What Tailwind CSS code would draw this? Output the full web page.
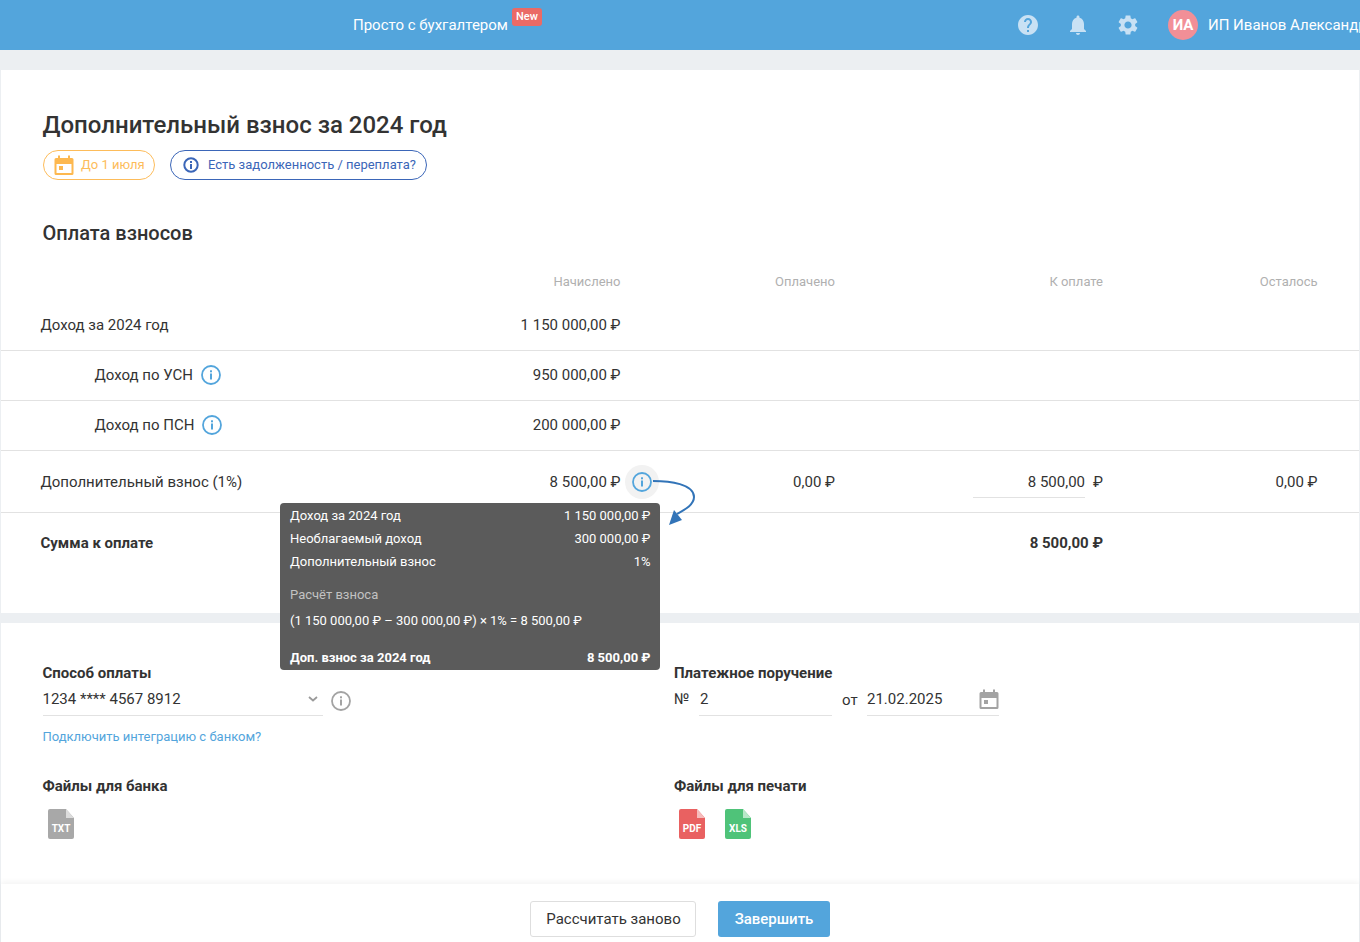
<!DOCTYPE html>
<html lang="ru">
<head>
  <meta charset="UTF-8">
  <meta name="viewport" content="width=device-width, initial-scale=1.0">
  <title>Дополнительный взнос за 2024 год</title>
  <script src="https://cdn.jsdelivr.net/npm/@tailwindcss/browser@4"></script>
</head>
<body class="bg-[#eceff2] font-['Roboto',sans-serif] text-[#333333] h-[942px] overflow-hidden">

  <!-- Header -->
  <header class="h-[50px] bg-[#53a5dc] flex items-center text-white relative">
    <div class="pl-[353px] flex-1 text-[15px] font-normal">
      <span class="relative">Просто с бухгалтером
        <span class="absolute left-[159px] top-[-8px] w-[30px] h-[18px] rounded-[3px] bg-[#ea6a66] text-[11px] font-medium flex items-center justify-center">New</span>
      </span>
    </div>
    <div class="flex items-center shrink-0 w-[344px] overflow-hidden whitespace-nowrap">
      <svg class="w-6 h-6 shrink-0" viewBox="0 0 24 24" fill="#c8e1f4"><path d="M12 2C6.48 2 2 6.48 2 12s4.48 10 10 10 10-4.48 10-10S17.52 2 12 2zm1 17h-2v-2h2v2zm2.07-7.75-.9.92C13.45 12.9 13 13.5 13 15h-2v-.5c0-1.1.45-2.1 1.17-2.83l1.24-1.26c.37-.36.59-.86.59-1.41 0-1.1-.9-2-2-2s-2 .9-2 2H8c0-2.21 1.79-4 4-4s4 1.79 4 4c0 .88-.36 1.68-.93 2.25z"/></svg>
      <svg class="w-6 h-6 shrink-0 ml-[26px]" viewBox="0 0 24 24" fill="#c8e1f4"><path d="M12 22c1.1 0 2-.9 2-2h-4c0 1.1.9 2 2 2zm6-6v-5c0-3.07-1.63-5.64-4.5-6.32V4c0-.83-.67-1.5-1.5-1.5s-1.5.67-1.5 1.5v.68C7.64 5.36 6 7.92 6 11v5l-2 2v1h16v-1l-2-2z"/></svg>
      <svg class="w-6 h-6 shrink-0 ml-[26px]" viewBox="0 0 24 24" fill="#c8e1f4"><path d="M19.14 12.94c.04-.3.06-.61.06-.94 0-.32-.02-.64-.07-.94l2.03-1.58c.18-.14.23-.41.12-.61l-1.92-3.32c-.12-.22-.37-.29-.59-.22l-2.39.96c-.5-.38-1.03-.7-1.62-.94l-.36-2.54c-.04-.24-.24-.41-.48-.41h-3.84c-.24 0-.43.17-.47.41l-.36 2.54c-.59.24-1.13.57-1.62.94l-2.39-.96c-.22-.08-.47 0-.59.22L2.74 8.87c-.12.21-.08.47.12.61l2.03 1.58c-.05.3-.09.63-.09.94s.02.64.07.94l-2.03 1.58c-.18.14-.23.41-.12.61l1.92 3.32c.12.22.37.29.59.22l2.39-.96c.5.38 1.03.7 1.62.94l.36 2.54c.05.24.24.41.48.41h3.84c.24 0 .44-.17.47-.41l.36-2.54c.59-.24 1.13-.56 1.62-.94l2.39.96c.22.08.47 0 .59-.22l1.92-3.32c.12-.22.07-.47-.12-.61l-2.01-1.58zM12 15.6c-1.98 0-3.6-1.62-3.6-3.6s1.62-3.6 3.6-3.6 3.6 1.62 3.6 3.6-1.62 3.6-3.6 3.6z"/></svg>
      <div class="w-[30px] h-[30px] shrink-0 rounded-full bg-[#f28f97] ml-[28px] flex items-center justify-center text-[15px] font-bold">ИА</div>
      <span class="ml-[10px] text-[15px]">ИП Иванов Александр</span>
    </div>
  </header>

  <main class="relative">
    <!-- Top card -->
    <section class="mt-5 mx-px bg-white h-[543px]">
      <div class="pt-[38px] pl-[41.5px]">
        <h1 class="text-[24px] leading-[34px] font-medium">Дополнительный взнос за 2024 год</h1>
        <div class="flex gap-[15px] mt-[8px] h-[30px]">
          <div class="border border-[#fdbc5a] rounded-full flex items-center pl-[10.5px] w-[112px] text-[13px] text-[#fdbc5a] gap-[7px]">
            <svg class="w-[20px] h-[22px]" viewBox="0 0 20 22" fill="#fdb84f"><path d="M2 4h2V1.500h2V4h8V1.500h2V4h2a1.500 1.500 0 0 1 1.500 1.500v14A1.500 1.500 0 0 1 18 21H2A1.500 1.500 0 0 1 .5 19.500v-14A1.500 1.500 0 0 1 2 4zm.5 6v9h15v-9zM5 12h4v4H5z" fill-rule="evenodd"/></svg>
            До 1 июля
          </div>
          <div class="border border-[#3b66b8] rounded-full flex items-center pl-[12.5px] w-[257px] text-[13px] text-[#3b66b8] gap-[9px]">
            <svg class="w-4 h-4" viewBox="0 0 16 16" fill="none"><circle cx="8" cy="8" r="6.700" stroke="#3b66b8" stroke-width="2"/><rect x="7" y="7" width="2" height="5" fill="#3b66b8"/><rect x="7" y="4" width="2" height="2" fill="#3b66b8"/></svg>
            Есть задолженность / переплата?
          </div>
        </div>
        <h2 class="text-[20px] leading-7 font-medium mt-[39px]">Оплата взносов</h2>
      </div>

      <!-- Table -->
      <div class="mt-[25px] text-[15px]">
        <div class="grid grid-cols-[580px_214.500px_268px_214.500px] pl-[39.5px] h-[20px] items-center text-[13px] text-[#b0b0b0] text-right">
          <div>Начислено</div><div>Оплачено</div><div>К оплате</div><div>Осталось</div>
        </div>
        <div class="grid grid-cols-[580px_214.500px_268px_214.500px] pl-[39.5px] h-[59px] pt-[9px] items-center border-b border-[#e2e2e2] text-right">
          <div class="flex justify-between"><span>Доход за 2024 год</span><span>1 150 000,00 ₽</span></div>
        </div>
        <div class="grid grid-cols-[580px_214.500px_268px_214.500px] pl-[39.5px] h-[50px] items-center border-b border-[#e2e2e2] text-right">
          <div class="flex justify-between">
            <span class="pl-[54px] flex items-center gap-[8px]">Доход по УСН
              <svg class="w-[20px] h-[20px] -mt-px" viewBox="0 0 20 20" fill="none"><circle cx="10" cy="10" r="9" stroke="#53a5dc" stroke-width="1.800"/><rect x="9" y="8.500" width="2" height="6" fill="#53a5dc"/><rect x="9" y="5.300" width="2" height="2" fill="#53a5dc"/></svg>
            </span>
            <span>950 000,00 ₽</span>
          </div>
        </div>
        <div class="grid grid-cols-[580px_214.500px_268px_214.500px] pl-[39.5px] h-[50px] items-center border-b border-[#e2e2e2] text-right">
          <div class="flex justify-between">
            <span class="pl-[54px] flex items-center gap-[8px]">Доход по ПСН
              <svg class="w-[20px] h-[20px] -mt-px" viewBox="0 0 20 20" fill="none"><circle cx="10" cy="10" r="9" stroke="#53a5dc" stroke-width="1.800"/><rect x="9" y="8.500" width="2" height="6" fill="#53a5dc"/><rect x="9" y="5.300" width="2" height="2" fill="#53a5dc"/></svg>
            </span>
            <span>200 000,00 ₽</span>
          </div>
        </div>
        <div class="grid grid-cols-[580px_214.500px_268px_214.500px] pl-[39.5px] h-[62px] pt-[2px] items-center border-b border-[#e2e2e2] text-right">
          <div class="flex justify-between"><span>Дополнительный взнос (1%)</span><span>8 500,00 ₽</span></div>
          <div>0,00 ₽</div>
          <div class="flex justify-end gap-[8px]">
            <div class="w-[112px] h-[30px] border-b border-[#e2e2e2] leading-[29px]">8 500,00</div>
            <span class="leading-[29px]">₽</span>
          </div>
          <div>0,00 ₽</div>
        </div>
        <div class="grid grid-cols-[580px_214.500px_268px_214.500px] pl-[39.5px] h-[60px] items-center font-bold text-right">
          <div class="text-left">Сумма к оплате</div>
          <div></div>
          <div>8 500,00 ₽</div>
        </div>
      </div>
    </section>

    <!-- Payment card -->
    <section class="mt-[10px] mx-px bg-white h-[261px] grid grid-cols-[631.5px_1fr] pl-[41.5px] pt-[40px] text-[15px] content-start">
      <div>
        <div class="font-bold leading-[20px]">Способ оплаты</div>
        <div class="flex items-center">
          <div class="w-[280.5px] h-[33px] border-b border-[#e2e2e2] flex items-center justify-between">
            <span>1234 **** 4567 8912</span>
            <svg class="w-[10px] h-[6px] mr-[5px]" viewBox="0 0 10 6" fill="none"><path d="M1 1l4 3.500L9 1" stroke="#9a9a9a" stroke-width="1.800"/></svg>
          </div>
          <svg class="w-5 h-5 ml-[8px] mt-[2px]" viewBox="0 0 20 20" fill="none"><circle cx="10" cy="10" r="9" stroke="#a3a3a3" stroke-width="1.800"/><rect x="9" y="8.500" width="2" height="6" fill="#a3a3a3"/><rect x="9" y="5.300" width="2" height="2" fill="#a3a3a3"/></svg>
        </div>
        <div class="text-[13px] text-[#53a5dc] mt-[13px] leading-[16px]">Подключить интеграцию с банком?</div>
        <div class="font-bold leading-[20px] mt-[31px]">Файлы для банка</div>
        <div class="flex mt-[13px] pl-[5.5px]">
          <div class="relative w-[26px] h-[30px] text-white text-[10px] font-bold">
            <svg class="absolute inset-0 w-full h-full" viewBox="0 0 26 30"><path d="M2 0H18L26 9V28a2 2 0 0 1-2 2H2a2 2 0 0 1-2-2V2a2 2 0 0 1 2-2z" fill="#a8a8a8"/><path d="M18 0L26 9H18z" fill="#dcdcdc"/></svg>
            <span class="relative flex justify-center pt-[14px] leading-[12px]">TXT</span>
          </div>
        </div>
      </div>
      <div>
        <div class="font-bold leading-[20px]">Платежное поручение</div>
        <div class="flex items-center">
          <span class="w-[25px]">№</span>
          <div class="w-[133px] h-[33px] border-b border-[#e2e2e2] flex items-center pl-px">2</div>
          <span class="ml-[10px] w-[25px] pt-[2px]">от</span>
          <div class="w-[132px] h-[33px] border-b border-[#e2e2e2] flex items-center justify-between">
            <span>21.02.2025</span>
            <svg class="w-[20px] h-[22px]" viewBox="0 0 20 22" fill="#a3a3a3"><path d="M2 4h2V1.500h2V4h8V1.500h2V4h2a1.500 1.500 0 0 1 1.500 1.500v14A1.500 1.500 0 0 1 18 21H2A1.500 1.500 0 0 1 .5 19.500v-14A1.500 1.500 0 0 1 2 4zm.5 6v9h15v-9zM5 12h4v4H5z" fill-rule="evenodd"/></svg>
          </div>
        </div>
        <div class="font-bold leading-[20px] mt-[60px]">Файлы для печати</div>
        <div class="flex mt-[13px] pl-[5px] gap-[20px]">
          <div class="relative w-[26px] h-[30px] text-white text-[10px] font-bold">
            <svg class="absolute inset-0 w-full h-full" viewBox="0 0 26 30"><path d="M2 0H18L26 9V28a2 2 0 0 1-2 2H2a2 2 0 0 1-2-2V2a2 2 0 0 1 2-2z" fill="#e96161"/><path d="M18 0L26 9H18z" fill="#f6bcbc"/></svg>
            <span class="relative flex justify-center pt-[14px] leading-[12px]">PDF</span>
          </div>
          <div class="relative w-[26px] h-[30px] text-white text-[10px] font-bold">
            <svg class="absolute inset-0 w-full h-full" viewBox="0 0 26 30"><path d="M2 0H18L26 9V28a2 2 0 0 1-2 2H2a2 2 0 0 1-2-2V2a2 2 0 0 1 2-2z" fill="#4fc379"/><path d="M18 0L26 9H18z" fill="#b8e8c9"/></svg>
            <span class="relative flex justify-center pt-[14px] leading-[12px]">XLS</span>
          </div>
        </div>
      </div>
    </section>

    <!-- Footer -->
    <footer class="bg-white h-[70px] mx-px flex items-center justify-center gap-[22px] shadow-[0_-2px_6px_rgba(0,0,0,0.05)] text-[15px]">
      <button class="w-[166px] h-[36px] border border-[#dedede] rounded-[3px] bg-white pl-px">Рассчитать заново</button>
      <button class="w-[112px] h-[36px] rounded-[3px] bg-[#53a5dc] text-white font-medium">Завершить</button>
    </footer>

    <!-- Tooltip over the table -->
    <div class="absolute left-[280px] top-[433px] w-[380px] h-[167px] rounded-[4px] bg-[#5b5b5b] text-white text-[13px] pl-[10px] pr-[9.5px] pt-[1px]">
      <div class="flex justify-between h-[23px] items-center"><span>Доход за 2024 год</span><span>1 150 000,00 ₽</span></div>
      <div class="flex justify-between h-[23px] items-center"><span>Необлагаемый доход</span><span>300 000,00 ₽</span></div>
      <div class="flex justify-between h-[23px] items-center"><span>Дополнительный взнос</span><span>1%</span></div>
      <div class="mt-[10px] h-[23px] flex items-center text-[#c2c2c2]">Расчёт взноса</div>
      <div class="mt-[3px] h-[23px] flex items-center">(1 150 000,00 ₽ – 300 000,00 ₽) × 1% = 8 500,00 ₽</div>
      <div class="flex justify-between mt-[14px] h-[23px] items-center font-bold"><span>Доп. взнос за 2024 год</span><span>8 500,00 ₽</span></div>
    </div>

    <!-- Highlighted info icon with arrow -->
    <div class="absolute left-[625px] top-[395px] w-[34px] h-[34px] rounded-full bg-[#f2f2f2] flex items-center justify-center">
      <svg class="w-[20px] h-[20px]" viewBox="0 0 20 20" fill="none"><circle cx="10" cy="10" r="9" stroke="#53a5dc" stroke-width="1.800"/><rect x="9" y="8.500" width="2" height="6" fill="#53a5dc"/><rect x="9" y="5.300" width="2" height="2" fill="#53a5dc"/></svg>
    </div>
    <svg class="absolute left-[650px] top-[408px] w-[50px] h-[50px]" viewBox="0 0 50 50" fill="none">
      <path d="M3 3C20 3 44 6 44 19C44 27 34 32 27 36" stroke="#3274b8" stroke-width="2"/>
      <path d="M19 47L32 42L24 32Z" fill="#3274b8"/>
    </svg>
  </main>
</body>
</html>
